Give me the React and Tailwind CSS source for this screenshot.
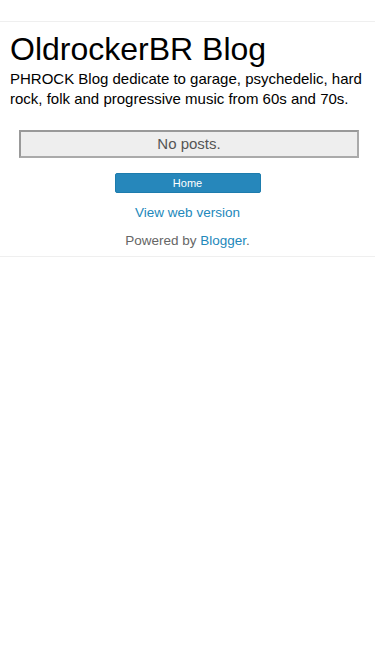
export default function App() {
  return (
    <div className="min-h-[667px] bg-white" style={{ fontFamily: '"Liberation Sans", Arial, sans-serif' }}>
      <div className="h-[21px]" />
      <div className="border-t border-[#efefef]">
        <div className="px-[10px] pt-[9px]">
          <h1 className="text-[32px] leading-[37px] text-black font-normal">OldrockerBR Blog</h1>
          <p className="mt-[1px] text-[15px] leading-[19.5px] text-black">
            PHROCK Blog dedicate to garage, psychedelic, hard rock, folk and progressive music from 60s and 70s.
          </p>
        </div>
        <div className="ml-[19px] mt-[22px] w-[340px] h-[28px] border-2 border-[#aaa] border-t-[#999] border-l-[#999] bg-[#eeeeee] flex items-center justify-center text-[15px] text-[#555]">
          No posts.
        </div>
        <div className="flex justify-center mt-[15px]">
          <div className="w-[146px] h-[20px] rounded-[2px] bg-[#2687bb] border border-[#1d7cad] text-white text-[11px] flex items-center justify-center">
            Home
          </div>
        </div>
        <div className="text-center mt-[12px] text-[13.5px] leading-[16px] text-[#2288bb]">View web version</div>
        <div className="text-center mt-[12px] text-[13.5px] leading-[16px] text-[#666]">
          Powered by <span className="text-[#2288bb]">Blogger</span>.
        </div>
        <div className="mt-[7px] border-t border-[#efefef]" />
      </div>
    </div>
  );
}
